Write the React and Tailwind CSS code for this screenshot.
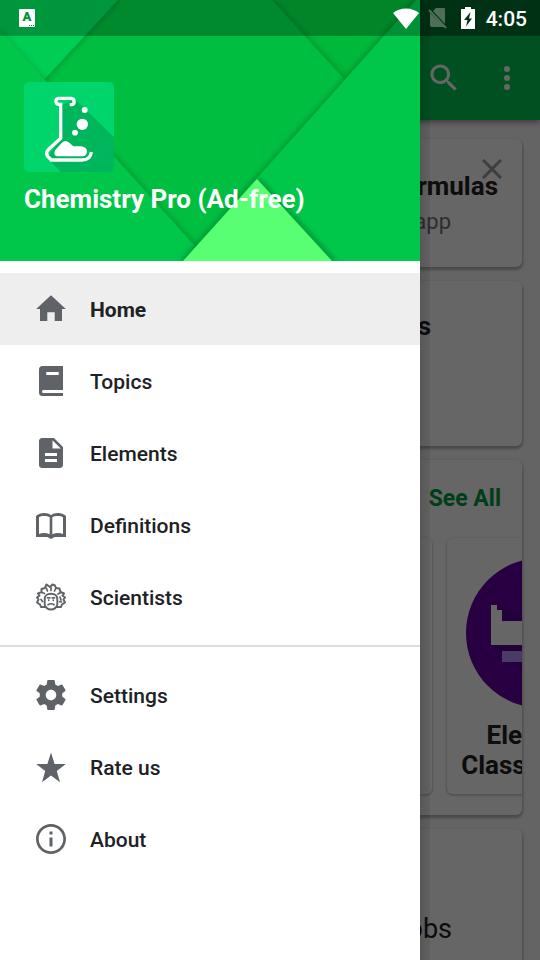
import React from "react";

const ICON = "size-9 shrink-0 fill-[#5f6368]";

function HomeIcon() {
  return (
    <svg viewBox="0 0 36 36" className={ICON} aria-hidden="true">
      <path d="M18 4.3 32.8 18H29v12h-7.3v-8.7h-7.4V30H7V18H3.2Z" />
    </svg>
  );
}

function TopicsIcon() {
  return (
    <svg viewBox="0 0 36 36" className={ICON} aria-hidden="true">
      <path
        fillRule="evenodd"
        d="M30 3H9.500Q6 3 6 6.500V29.500Q6 33 9.500 33H30V30H10.500Q9 30 9 28.500T10.500 27H30ZM13.300 9H25.700V12H13.300Z"
      />
    </svg>
  );
}

function ElementsIcon() {
  return (
    <svg viewBox="0 0 24 24" className={ICON} aria-hidden="true">
      <path d="M14 2H6c-1.100 0-1.990.9-1.990 2L4 20c0 1.100.89 2 1.990 2H18c1.100 0 2-.9 2-2V8l-6-6zm2 16H8v-2h8v2zm0-4H8v-2h8v2zm-3-5V3.500L18.500 9H13z" />
    </svg>
  );
}

function DefinitionsIcon() {
  return (
    <svg viewBox="0 0 36 36" className={ICON} aria-hidden="true">
      <path
        fillRule="evenodd"
        d="M3 9C5 7 8 6 11 6c3 0 5.500.8 7 2.300C19.500 6.800 22 6 25 6c3 0 6 1 8 3v21h-11c-1.500 0-2 1.700-4 1.700s-2.500-1.700-4-1.700H3ZM6 10.300v16.600C7.500 26.300 9.300 26 11 26c2 0 4 .4 5.700 1.200V10.300C15.500 9.300 13.500 8.900 11 8.900s-3.800.5-5 1.400ZM19.300 10.300v16.900C21 26.400 23 26 25 26c1.700 0 3.500.3 5 .9V10.300C28.800 9.400 27.500 8.900 25 8.900s-4.500.4-5.700 1.400Z"
      />
    </svg>
  );
}

function ScientistsIcon() {
  return (
    <svg
      viewBox="0 0 36 36"
      className="size-9 shrink-0 fill-none stroke-[#5f6368]"
      strokeWidth="2"
      strokeLinecap="round"
      strokeLinejoin="round"
      aria-hidden="true"
    >
      <path d="M12.500 28 8 28 7 25.500 4 23.500 5.500 20.500 4 18.500 6.500 16.500 5 14.500 8.500 13 8.500 10 12 9 13.500 5.500 17 8 19.500 5.500 22 6.500 23 9 26.500 9.500 27.500 13 31 14.500 29.500 16.500 32 18.500 30.500 20.500 32 23.500 29 25.500 28 28 23.500 28" />
      <path d="M11.700 20.500C11.500 16.500 14 14.700 18 14.700s6.500 1.800 6.300 5.800V25.500C24 28.500 21 30.500 18 30.500s-6-2-6.300-5Z" strokeWidth="1.900" />
      <path d="M13.500 9.500 14.500 12M18 8.500V11.500M22.700 9.500 21.500 12M9 13.500 11.500 14.500M8 20.500 9.500 22.500M27.500 13.500 25 15M27 18 28 21M28.500 23 26.500 22.500" strokeWidth="1.700" />
      <path d="M14.500 18.800h2.300M19.200 18.800h2.300M15.700 21v.3M20.300 21v.3M15 25.800Q18 23.700 21 25.800" strokeWidth="1.700" />
    </svg>
  );
}

function SettingsIcon() {
  return (
    <svg viewBox="0 0 24 24" className={ICON} aria-hidden="true">
      <path d="M19.430 12.980c.04-.32.07-.64.07-.98s-.03-.66-.07-.98l2.110-1.650c.19-.15.24-.42.12-.64l-2-3.460c-.12-.22-.39-.3-.61-.22l-2.490 1c-.52-.4-1.080-.73-1.690-.98l-.38-2.650C14.460 2.180 14.250 2 14 2h-4c-.25 0-.46.18-.49.42l-.38 2.650c-.61.25-1.170.59-1.690.98l-2.490-1c-.23-.09-.49 0-.61.22l-2 3.460c-.13.22-.07.49.12.64l2.110 1.650c-.04.32-.07.65-.07.98s.03.66.07.98l-2.110 1.650c-.19.15-.24.42-.12.64l2 3.460c.12.22.39.3.61.22l2.490-1c.52.4 1.080.73 1.690.98l.38 2.650c.03.24.24.42.49.42h4c.25 0 .46-.18.49-.42l.38-2.650c.61-.25 1.170-.59 1.690-.98l2.490 1c.23.09.49 0 .61-.22l2-3.460c.12-.22.07-.49-.12-.64l-2.110-1.650zM12 15.500c-1.930 0-3.500-1.570-3.500-3.500s1.570-3.500 3.500-3.500 3.500 1.570 3.500 3.500-1.570 3.500-3.500 3.500z" />
    </svg>
  );
}

function StarIcon() {
  return (
    <svg viewBox="0 0 36 36" className={ICON} aria-hidden="true">
      <path d="M18 3.500 21.600 15H32.800L23.800 22 27 33.200 18 26.500 9 33.200 12.200 22 3.200 15H14.400Z" />
    </svg>
  );
}

function AboutIcon() {
  return (
    <svg viewBox="0 0 24 24" className={ICON} aria-hidden="true">
      <path d="M11 17h2v-6h-2v6zm1-15C6.480 2 2 6.480 2 12s4.480 10 10 10 10-4.480 10-10S17.520 2 12 2zm0 18.200c-4.520 0-8.200-3.680-8.200-8.200S7.480 3.800 12 3.800s8.200 3.680 8.200 8.200-3.680 8.200-8.200 8.200zM11 9h2V7h-2v2z" />
    </svg>
  );
}

const MAIN_ITEMS = [
  { label: "Home", Icon: HomeIcon, active: true },
  { label: "Topics", Icon: TopicsIcon },
  { label: "Elements", Icon: ElementsIcon },
  { label: "Definitions", Icon: DefinitionsIcon },
  { label: "Scientists", Icon: ScientistsIcon },
];

const MORE_ITEMS = [
  { label: "Settings", Icon: SettingsIcon },
  { label: "Rate us", Icon: StarIcon },
  { label: "About", Icon: AboutIcon },
];

function MenuList({ items }) {
  return (
    <ul>
      {items.map(({ label, Icon, active }) => (
        <li key={label}>
          <a
            href="#"
            aria-current={active ? "page" : undefined}
            className={
              "flex h-[72px] items-center gap-[21px] px-[33px] text-[21px] leading-7 text-[#202124] " +
              (active ? "bg-[#eeeeee] font-bold" : "font-medium")
            }
          >
            <Icon />
            <span className="pt-0.5">{label}</span>
          </a>
        </li>
      ))}
    </ul>
  );
}

function DrawerArt() {
  return (
    <svg
      viewBox="0 0 420 261"
      preserveAspectRatio="none"
      className="absolute inset-0 size-full"
      aria-hidden="true"
    >
      <defs>
        <filter id="soft" x="-10%" y="-10%" width="120%" height="120%">
          <feGaussianBlur stdDeviation="2" />
        </filter>
      </defs>
      <rect width="420" height="261" fill="#00b839" />
      <path d="M272 0 344 78" stroke="#006a20" strokeOpacity=".35" strokeWidth="5" filter="url(#soft)" />
      <path d="M118 0H272L344 79 190 261 44 80Z" fill="#00be40" />
      <path d="M118 0 44 80" fill="none" stroke="#006a20" strokeOpacity=".35" strokeWidth="5" filter="url(#soft)" />
      <path d="M0 0H118L44 80 0 33Z" fill="#00ce54" />
      <path d="M0 30 44 79" fill="none" stroke="#006a20" strokeOpacity=".2" strokeWidth="5" filter="url(#soft)" />
      <path d="M44 79 197 248" fill="none" stroke="#006a20" strokeOpacity=".35" strokeWidth="5" filter="url(#soft)" />
      <path d="M0 30 44 79 195 246 182 261H0Z" fill="#00c64a" />
      <path d="M416 0 183 261" stroke="#006a20" strokeOpacity=".4" strokeWidth="5" filter="url(#soft)" />
      <path d="M416 0H420V261H183Z" fill="#00c74a" />
      <path d="M258 179 334 261" stroke="#006a20" strokeOpacity=".45" strokeWidth="5" filter="url(#soft)" />
      <path d="M257 179 332 261H183Z" fill="#58ff72" />
    </svg>
  );
}

function AppLogo() {
  return (
    <svg viewBox="12 18 270 270" className="size-[90px] rounded-[5px]" role="img" aria-label="Chemistry flask">
      <rect x="12" y="18" width="270" height="270" fill="#00d56b" />
      <path d="M164 68 282 184V288H122L82 246 122 187V90Z" fill="#00b65c" />
      <path
        d="M149 86H156C165 84 165 68 154 67H116C105 68 105 83 116 85H122V187L84 222Q76 231 83 241L94 252H186C203 252 212 244 214 228"
        fill="none"
        stroke="#fff"
        strokeWidth="10"
      />
      <path d="M105 223 125 201Q136 190 148 200L160 211H184Q201 214 201 227 200 239 188 241H112Q99 240 105 223Z" fill="#fff" />
      <circle cx="194" cy="102" r="9" fill="#fff" />
      <circle cx="187" cy="145" r="17" fill="#fff" />
      <circle cx="165" cy="170" r="8.500" fill="#fff" />
    </svg>
  );
}

function Drawer() {
  return (
    <aside className="absolute inset-y-0 left-0 w-[420px] max-w-full bg-white">
      <header className="relative px-6 pt-[82px] pb-[46px]">
        <DrawerArt />
        <div className="relative">
          <AppLogo />
          <h1 className="mt-3 text-[26px] leading-[31px] font-bold text-white">Chemistry Pro (Ad-free)</h1>
        </div>
      </header>
      <nav className="pt-3">
        <MenuList items={MAIN_ITEMS} />
        <hr className="my-3 border-t-2 border-[#dedede]" />
        <MenuList items={MORE_ITEMS} />
      </nav>
    </aside>
  );
}

function StatusBar() {
  return (
    <div className="absolute inset-x-0 top-0 flex h-9 items-center bg-black/27 pr-[13px] pl-[19px] text-white">
      <span className="flex h-[18px] w-4 flex-col items-center justify-between rounded-[1px] bg-white pt-0.5 pb-px text-[#00933a]">
        <span className="text-[13px] leading-3 font-black">A</span>
        <span className="mr-px flex gap-px self-end" aria-hidden="true">
          <i className="h-px w-px bg-[#00933a]" />
          <i className="h-px w-px bg-[#00933a]" />
          <i className="h-px w-px bg-[#00933a]" />
        </span>
      </span>
      <svg viewBox="0 0 26 21" className="ml-auto h-[21px] w-[26px]" aria-hidden="true">
        <path d="M0 5C7-1 19-1 26 5L13 21Z" fill="#fff" />
      </svg>
      <svg viewBox="0 0 20 21" className="ml-[9px] h-[21px] w-5" aria-hidden="true">
        <path d="M8 0H16Q17 0 17 1V16L5 3ZM2 5 16 19H4Q2 19 2 17Z" fill="#fff" fillOpacity=".3" />
        <path d="M1 2 18 20" stroke="#fff" strokeOpacity=".3" strokeWidth="2" />
      </svg>
      <svg viewBox="0 0 14 22" className="ml-[13px] h-[22px] w-[14px]" aria-hidden="true">
        <path fillRule="evenodd" d="M4 0H10V2H14V22H0V2H4ZM9.500 5 3 13H6.500L5 19.500 11 11.500H8Z" fill="#fff" />
      </svg>
      <span className="ml-[11px] pt-0.5 text-[21px] leading-6 font-medium">4:05</span>
    </div>
  );
}

function Card({ className, children }) {
  return (
    <section
      className={"relative shrink-0 rounded-[6px] bg-white shadow-[0_2px_3px_1px_rgba(0,0,0,0.28)] " + className}
    >
      {children}
    </section>
  );
}

function HomePage() {
  return (
    <div className="flex h-full flex-col bg-[#fafafa]">
      <header className="relative z-10 shrink-0 bg-[#00c853] shadow-[0_2px_6px_rgba(0,0,0,0.45)]">
        <div className="h-9 bg-black/15" />
        <div className="flex h-[84px] items-center justify-end gap-[27px] pr-[15px]">
          <button type="button" aria-label="Search">
            <svg viewBox="0 0 24 24" className="size-9 fill-white">
              <path d="M15.500 14h-.79l-.28-.27C15.410 12.590 16 11.110 16 9.500 16 5.910 13.090 3 9.500 3S3 5.910 3 9.500 5.910 16 9.500 16c1.610 0 3.090-.59 4.230-1.570l.27.28v.79l5 4.990L20.490 19l-4.990-5zm-6 0C7.010 14 5 11.990 5 9.500S7.010 5 9.500 5 14 7.010 14 9.500 11.990 14 9.500 14z" />
            </svg>
          </button>
          <button type="button" aria-label="More options">
            <svg viewBox="0 0 24 24" className="size-9 fill-white">
              <circle cx="12" cy="6" r="2" />
              <circle cx="12" cy="12" r="2" />
              <circle cx="12" cy="18" r="2" />
            </svg>
          </button>
        </div>
      </header>

      <main className="flex flex-1 flex-col gap-[14px] overflow-hidden px-[18px] pt-[19px] text-right text-[#212121]">
        <Card className="pt-[31px] pb-[30px]">
          <h2 className="pr-6 text-[26px] leading-8 font-bold">Formulas</h2>
          <p className="mt-[5px] pr-[71px] text-[22px] leading-[30px] text-[#6f7277]">app</p>
          <button type="button" aria-label="Dismiss" className="absolute top-5 right-5">
            <svg viewBox="0 0 20 20" className="size-5">
              <path d="M1 1 19 19M19 1 1 19" stroke="#969a9f" strokeWidth="3" />
            </svg>
          </button>
        </Card>

        <Card className="pt-[29px] pr-[91px] pb-[104px]">
          <h2 className="text-[26px] leading-8 font-bold">s</h2>
        </Card>

        <Card className="overflow-hidden pt-6 pb-[21px]">
          <a href="#" className="block pr-[21px] text-[23px] leading-[30px] font-bold text-[#009a40]">
            See All
          </a>
          <div className="mt-6 flex gap-[15px] pl-[226px]">
            <div className="w-[188px] shrink-0 rounded-[6px] shadow-[0_1px_2px_1px_rgba(0,0,0,0.18)]" />
            <div className="flex w-[188px] shrink-0 flex-col items-center gap-3 rounded-[6px] pt-5 pb-[14px] text-center shadow-[0_1px_2px_1px_rgba(0,0,0,0.18)]">
              <svg viewBox="0 0 150 150" className="size-[150px]" aria-hidden="true">
                <circle cx="75" cy="75" r="75" fill="#6500a6" />
                <path d="M31 46 150 110V140L80 130 25 87Z" fill="#55008d" />
                <path d="M25 47H31V52H36V63H125V87H25Z" fill="#fff" />
                <path d="M36 93H115V104H36Z" fill="#b891ff" />
              </svg>
              <h3 className="text-[26px] leading-[30px] font-bold">
                Elements
                <br />
                Classification
              </h3>
            </div>
          </div>
        </Card>

        <Card className="pt-[84px] pr-[70px] pb-[84px]">
          <p className="text-[27px] leading-8">Jobs</p>
        </Card>
      </main>
    </div>
  );
}

export default function App() {
  return (
    <div className="relative h-screen overflow-hidden font-['Roboto',sans-serif]">
      <HomePage />
      <div className="absolute inset-0 z-20 bg-black/60">
        <div className="absolute inset-y-0 left-[420px] w-[10px] bg-linear-to-r from-black/14 to-black/6" />
        <Drawer />
        <StatusBar />
      </div>
    </div>
  );
}
